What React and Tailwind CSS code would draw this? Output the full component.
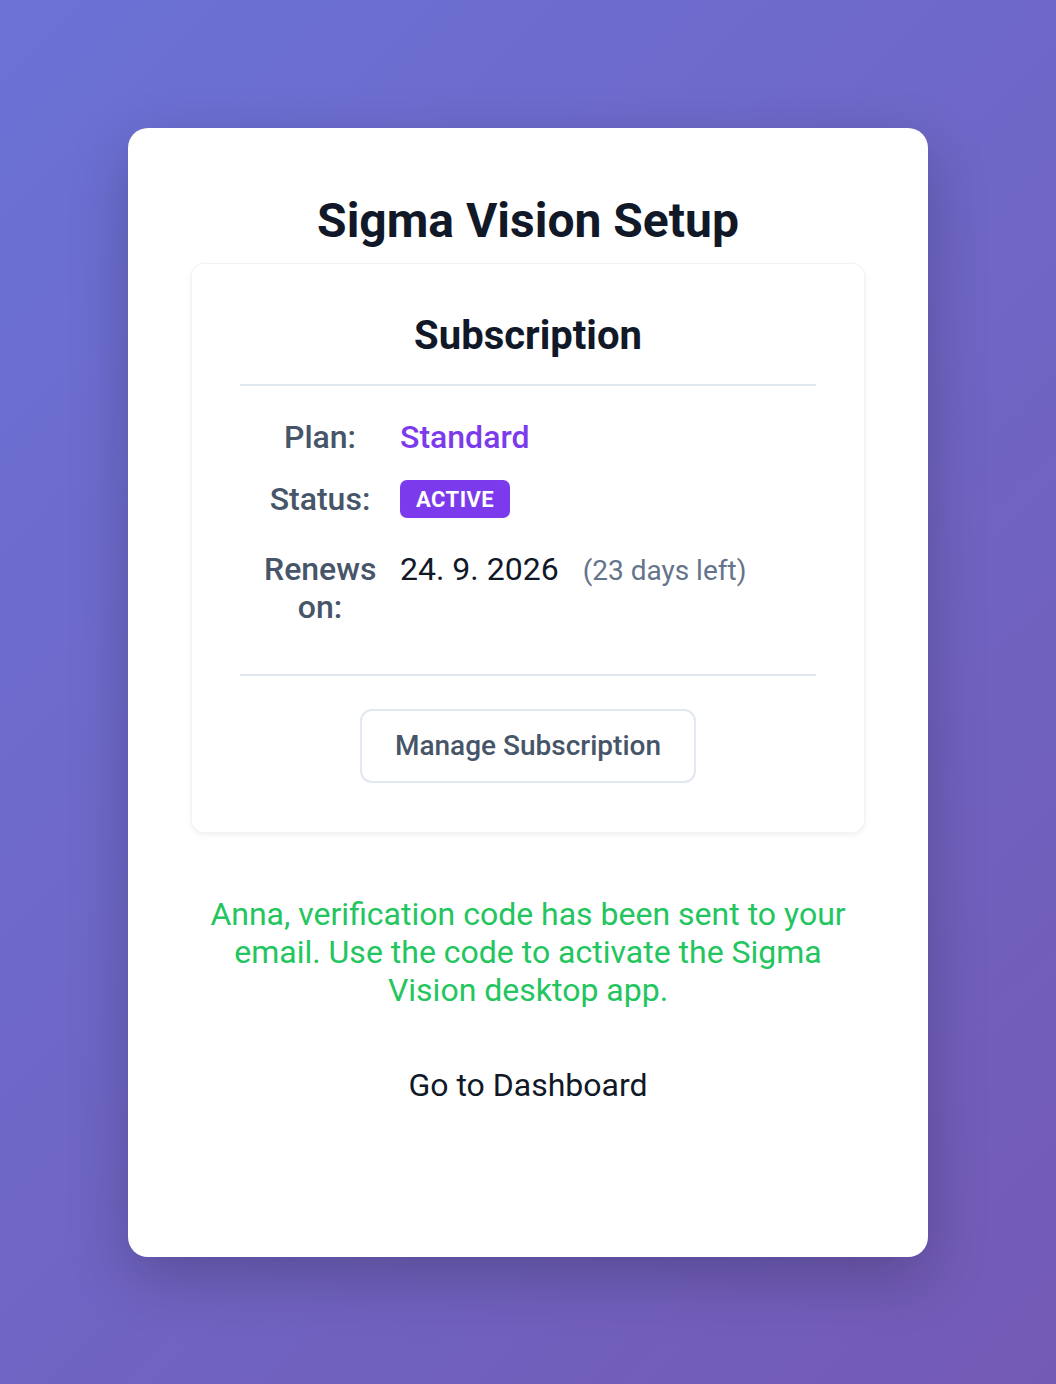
import React from "react";

export default function App() {
  return (
    <div
      className="min-h-[1384px] w-full p-32 bg-[linear-gradient(135deg,#6b72d6_0%,#735ab5_100%)]"
      style={{ fontFamily: "Roboto, 'Noto Sans', sans-serif" }}
    >
      <div className="bg-white rounded-[20px] shadow-[0_20px_60px_rgba(0,0,0,0.22)] px-16 pt-16 pb-[153px] flex flex-col items-center">
        <h1 className="text-[48px] leading-[1.2] font-bold text-[#111827] text-center mb-[14px]">
          Sigma Vision Setup
        </h1>

        <div className="w-full bg-white rounded-[12px] shadow-[0_0_0_1px_#f1f3f6,0_2px_6px_rgba(15,23,42,0.08)] px-12 pt-12 pb-[49px]">
          <h2 className="text-[40px] leading-[1.2] font-bold text-[#111827] text-center">
            Subscription
          </h2>
          <div className="mt-6 h-[2px] bg-[#e2e8f0]" />

          <div className="px-6 pt-8 flex flex-col">
            <div className="flex items-center gap-6">
              <div className="w-[112px] text-center text-[32px] leading-[1.2] font-medium text-[#475569]">Plan:</div>
              <div className="text-[32px] leading-[1.2] font-medium text-[#7c3aed]">Standard</div>
            </div>
            <div className="flex items-center gap-6 mt-6">
              <div className="w-[112px] text-center text-[32px] leading-[1.2] font-medium text-[#475569]">Status:</div>
              <div className="rounded-[7px] bg-[#7c3aed] px-4 h-[38px] flex items-center text-[22px] font-bold text-white tracking-[0.02em]">
                ACTIVE
              </div>
            </div>
            <div className="flex items-start gap-6 mt-[33px]">
              <div className="w-[112px] text-center text-[32px] leading-[1.17] font-medium text-[#475569]">
                Renews on:
              </div>
              <div className="flex items-baseline">
                <span className="text-[32px] leading-[1.17] text-[#111827]">24. 9. 2026</span>
                <span className="ml-6 text-[28px] leading-[1.17] text-[#64748b]">(23 days left)</span>
              </div>
            </div>
          </div>

          <div className="mt-12 h-[2px] bg-[#e2e8f0]" />

          <div className="flex justify-center mt-[33px]">
            <button className="rounded-[12px] border-2 border-[#e2e8f0] bg-white px-[33px] h-[74px] text-[28px] font-medium text-[#475569]">
              Manage Subscription
            </button>
          </div>
        </div>

        <p className="mt-[63px] text-[32px] leading-[38px] text-[#22c55e] text-center max-w-[660px]">
          Anna, verification code has been sent to your email. Use the code to activate the Sigma Vision desktop app.
        </p>

        <a className="mt-[57px] text-[32px] leading-[38px] text-[#111827] text-center">
          Go to Dashboard
        </a>
      </div>
    </div>
  );
}
